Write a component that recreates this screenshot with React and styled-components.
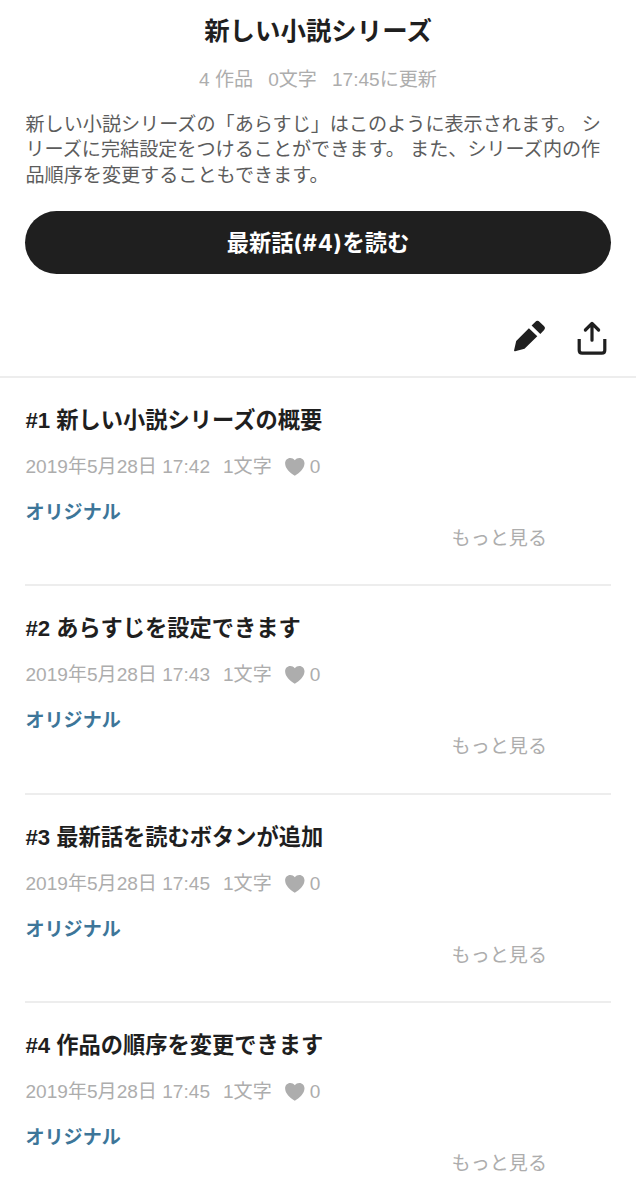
import React from 'react';
import styled, { createGlobalStyle } from 'styled-components';

const GlobalStyle = createGlobalStyle`
  * {
    box-sizing: border-box;
  }

  body {
    margin: 0;
    background: #fff;
    color: #1f1f1f;
    font-family: "Liberation Sans", "Noto Sans CJK JP", sans-serif;
  }
`;

const Page = styled.div`
  width: 636px;
  height: 1200px;
  overflow: hidden;
`;

const Header = styled.header`
  height: 378px;
  padding: 13px 25.44px 0;
  border-bottom: 2px solid #ededed;
  display: flex;
  flex-direction: column;
`;

const Title = styled.h1`
  margin: 0;
  font-size: 25.44px;
  line-height: 36px;
  text-align: center;
`;

const Stats = styled.div`
  display: flex;
  justify-content: center;
  gap: 15px;
  margin-top: 18px;
  font-size: 19.08px;
  line-height: 26px;
  color: #adadad;
`;

const Caption = styled.p`
  margin: 19px 0 0;
  font-size: 19.12px;
  line-height: 25.44px;
  color: #5c5c5c;
`;

const ReadButton = styled.button`
  flex: none;
  width: 100%;
  height: 63.6px;
  margin-top: 22.4px;
  padding: 0;
  border: none;
  border-radius: 32px;
  background: #1f1f1f;
  color: #fff;
  font-family: inherit;
  font-size: 22.26px;
  font-weight: bold;
  line-height: 64px;
`;

const EpisodeNumber = styled.span`
  font-family: Inter, sans-serif;
  letter-spacing: 0.7px;
`;

const Actions = styled.div`
  display: flex;
  justify-content: flex-end;
  gap: 31px;
  margin-top: 46px;
  padding-right: 4px;
`;

const EpisodeList = styled.ul`
  margin: 0;
  padding: 0 25.44px;
  list-style: none;
`;

const EpisodeItem = styled.li`
  height: 208.4px;
  padding-top: 27px;
  border-bottom: 2px solid #ededed;
`;

const EpisodeTitle = styled.h2`
  margin: 0;
  font-size: 22.26px;
  line-height: 32px;
`;

const Meta = styled.div`
  display: flex;
  align-items: center;
  margin-top: 17px;
  font-size: 19.08px;
  line-height: 26px;
  color: #adadad;
`;

const WordCount = styled.span`
  margin: 0 13px;
`;

const Likes = styled.span`
  display: flex;
  align-items: center;
  gap: 5px;
`;

const Tag = styled.div`
  margin-top: 20px;
  font-size: 19.08px;
  font-weight: bold;
  line-height: 26px;
  color: #3d7699;
`;

const More = styled.div`
  padding-right: 63.6px;
  font-size: 19.08px;
  line-height: 26px;
  text-align: right;
  color: #adadad;
`;

const PencilIcon = () => (
  <svg width="33" height="34" viewBox="0 0 33 34" fill="#1f1f1f">
    <path d="M3.2 20.9 15.9 8.2l8.4 8-12.8 12.6-9.4 2.5q-1.3.2-1-1z" />
    <path d="m18.6 5.5 3.6-3.6q2.2-2.1 4.5 0l4.2 4q2.1 2.2 0 4.3l-3.6 3.7z" />
  </svg>
);

const ShareIcon = () => (
  <svg
    width="30"
    height="35"
    viewBox="0 0 30 35"
    fill="none"
    stroke="#1f1f1f"
    strokeWidth="3.2"
    strokeLinecap="round"
    strokeLinejoin="round"
  >
    <path d="M15 20.2V4M8.4 10 15 3.4l6.6 6.6" />
    <path d="M2.2 19v11.2q0 3 3 3h19.6q3 0 3-3V19" strokeLinecap="butt" />
  </svg>
);

const HeartIcon = () => (
  <svg width="20" height="18" viewBox="0 0 20 18" fill="#adadad">
    <path d="M9.8 2.3C8.6.8 7.1 0 5.3 0 2.3 0 .1 2.3.1 5.3c0 5 4.5 9.5 9.7 12.4 5.2-2.9 9.7-7.4 9.7-12.4C19.5 2.3 17.3 0 14.3 0c-1.8 0-3.3.8-4.5 2.3z" />
  </svg>
);

const episodes = [
  { title: '#1 新しい小説シリーズの概要', date: '2019年5月28日 17:42' },
  { title: '#2 あらすじを設定できます', date: '2019年5月28日 17:43' },
  { title: '#3 最新話を読むボタンが追加', date: '2019年5月28日 17:45' },
  { title: '#4 作品の順序を変更できます', date: '2019年5月28日 17:45' },
];

const Episode = ({ title, date }) => (
  <EpisodeItem>
    <EpisodeTitle>{title}</EpisodeTitle>
    <Meta>
      <span>{date}</span>
      <WordCount>1文字</WordCount>
      <Likes>
        <HeartIcon />
        0
      </Likes>
    </Meta>
    <Tag>オリジナル</Tag>
    <More>もっと見る</More>
  </EpisodeItem>
);

const App = () => {
  return (
    <Page lang="ja">
      <GlobalStyle />
      <Header>
        <Title>新しい小説シリーズ</Title>
        <Stats>
          <span>4 作品</span>
          <span>0文字</span>
          <span>17:45に更新</span>
        </Stats>
        <Caption>
          新しい小説シリーズの「あらすじ」はこのように表示されます。 シリーズに完結設定をつけることができます。 また、シリーズ内の作品順序を変更することもできます。
        </Caption>
        <ReadButton>
          最新話<EpisodeNumber>(#4)</EpisodeNumber>を読む
        </ReadButton>
        <Actions>
          <PencilIcon />
          <ShareIcon />
        </Actions>
      </Header>

      <EpisodeList>
        {episodes.map((episode) => (
          <Episode key={episode.title} {...episode} />
        ))}
      </EpisodeList>
    </Page>
  );
};

export default App;
